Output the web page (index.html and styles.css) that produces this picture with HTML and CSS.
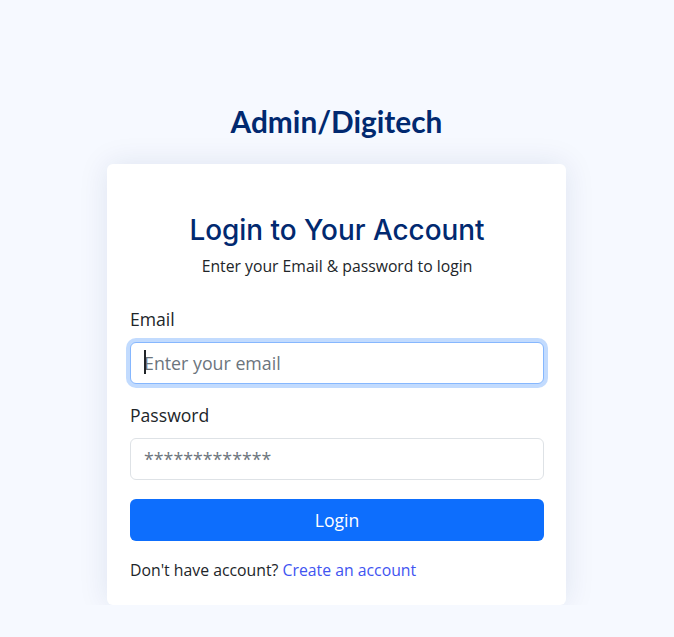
FILE: index.html
```html
<!DOCTYPE html>
<html lang="en">
<head>
<meta charset="utf-8">
<title>Login</title>
<link rel="stylesheet" href="styles.css">
</head>
<body>
<main class="page">
  <div class="wrap">
    <div class="logo">Admin/Digitech</div>
    <section class="card">
      <h1 class="card-title">Login to Your Account</h1>
      <p class="subtitle">Enter your Email &amp; password to login</p>
      <form class="form">
        <label class="label" for="email">Email</label>
        <div class="field">
          <input id="email" class="control focused" type="email" placeholder="Enter your email">
          <span class="caret"></span>
        </div>
        <label class="label label-pw" for="password">Password</label>
        <input id="password" class="control" type="password" placeholder="*************">
        <button class="btn" type="button">Login</button>
        <p class="foot">Don't have account? <a href="#" class="link">Create an account</a></p>
      </form>
    </section>
  </div>
</main>
</body>
</html>
```
FILE: styles.css
```css
* { box-sizing: border-box; }
html, body { margin: 0; padding: 0; }
body {
  background: #f6f9ff;
  font-family: "Open Sans", "Liberation Sans", sans-serif;
  color: #212529;
}
.page {
  display: flex;
  justify-content: center;
  padding: 105px 1px 0 0;
}
.wrap {
  width: 459px;
  display: flex;
  flex-direction: column;
  align-items: stretch;
}
.logo {
  text-align: center;
  font-family: "Lato", "Open Sans", sans-serif;
  font-weight: 700;
  font-size: 29.8px;
  line-height: 34px;
  color: #012970;
  margin-bottom: 25px;
}
.card {
  background: #fff;
  border-radius: 6px;
  box-shadow: 0 0 30px rgba(1, 41, 112, 0.1);
  padding: 50px 22px 24px 23px;
}
.card-title {
  margin: 0;
  text-align: center;
  font-family: "Inter", "Open Sans", sans-serif;
  font-weight: 500;
  font-size: 27.9px;
  line-height: 32px;
  color: #012970;
}
.subtitle {
  margin: 9px 0 0;
  text-align: center;
  font-size: 15.75px;
  line-height: 22px;
}
.form {
  display: flex;
  flex-direction: column;
  margin-top: 29px;
}
.label {
  font-size: 17.6px;
  line-height: 26px;
  margin-bottom: 10px;
}
.label-pw { margin-top: 18px; }
.field { position: relative; }
.control {
  display: block;
  height: 42px;
  width: 100%;
  border: 1px solid #dee2e6;
  border-radius: 6px;
  padding: 0 13px;
  font-family: "Open Sans", sans-serif;
  font-size: 17.8px;
  color: #212529;
  background: #fff;
  outline: none;
}
.control::placeholder { color: #6c757d; opacity: 1; }
.control.focused {
  border-color: #86b7fe;
  box-shadow: 0 0 0 4px rgba(13, 110, 253, 0.25);
}
.caret {
  position: absolute;
  left: 14px;
  top: 8px;
  width: 2px;
  height: 24px;
  background: #212529;
}
.btn {
  margin-top: 19px;
  height: 42px;
  border: none;
  border-radius: 6px;
  background: #0d6efd;
  color: #fff;
  font-family: "Open Sans", sans-serif;
  font-size: 17.6px;
  line-height: 40px;
}
.foot {
  margin: 18px 0 0;
  font-size: 15.8px;
  line-height: 22px;
}
.link { color: #4154f1; text-decoration: none; }
```
